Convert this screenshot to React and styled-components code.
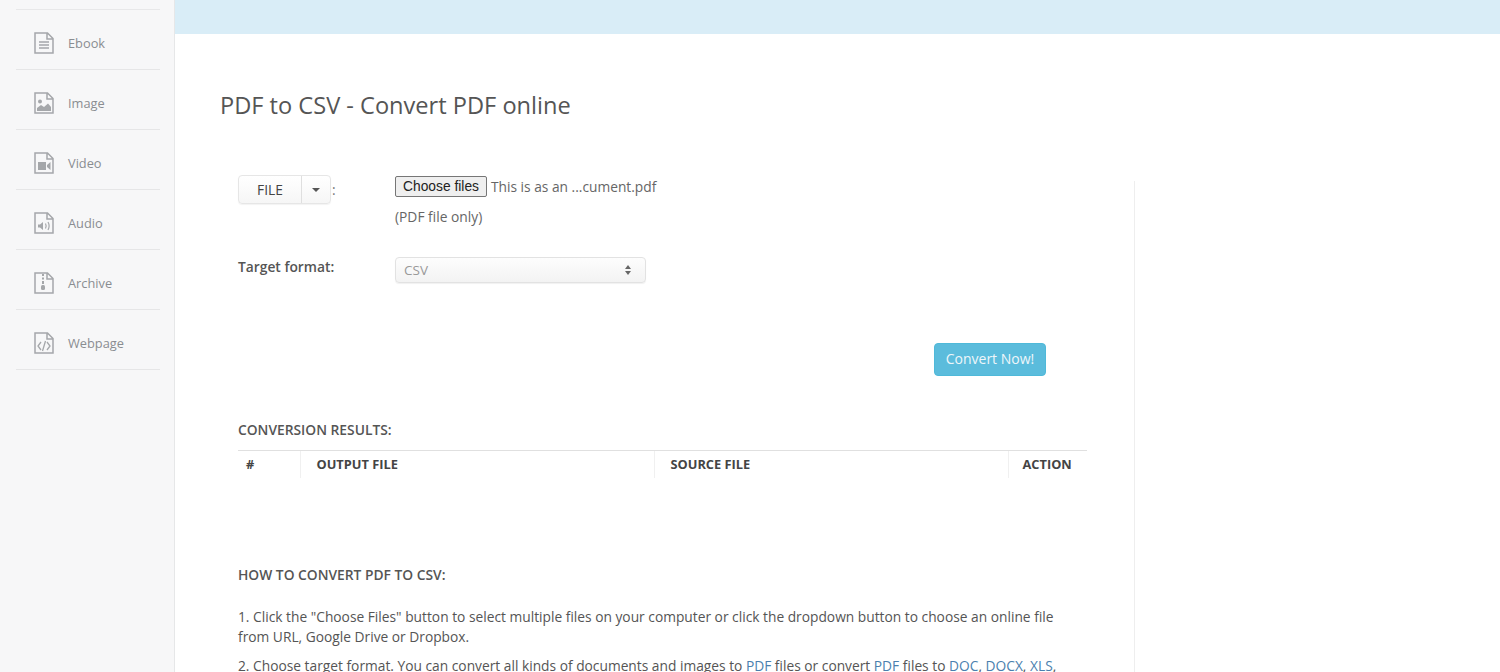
import styled, { createGlobalStyle } from 'styled-components';

const GlobalStyle = createGlobalStyle`
  html, body {
    margin: 0;
    padding: 0;
    height: 672px;
    overflow: hidden;
    background: #fff;
    font-family: 'Open Sans', 'Liberation Sans', sans-serif;
    color: #555;
  }
`;

const Page = styled.div`
  display: flex;
  height: 672px;
  overflow: hidden;
`;

const Sidebar = styled.aside`
  width: 174px;
  flex-shrink: 0;
  box-sizing: content-box;
  background: #f7f7f8;
  border-right: 1px solid #e6e7e8;
  padding-top: 9px;
`;

const NavList = styled.ul`
  list-style: none;
  margin: 0 14px 0 16px;
  padding: 0;
  border-top: 1px solid #e8e8e9;
`;

const NavItem = styled.li`
  display: flex;
  align-items: center;
  gap: 14px;
  box-sizing: border-box;
  height: 60px;
  padding: 6px 0 0 18px;
  border-bottom: 1px solid #e6e6e7;
  font-size: 12.8px;
  color: #8a8d91;
`;

const Main = styled.main`
  flex: 1;
  min-width: 0;
`;

const TopBar = styled.div`
  height: 34px;
  background: #d9edf7;
`;

const Content = styled.div`
  padding: 53px 0 0 45px;
`;

const Title = styled.h1`
  margin: 0;
  font-size: 23.6px;
  line-height: 36px;
  font-weight: 400;
  color: #555;
`;

const Panel = styled.div`
  width: 915px;
  height: 520px;
  margin-top: 58px;
  padding: 3px 0 0 18px;
  box-sizing: border-box;
  border-right: 1px solid #eeeeee;
`;

const FormRow = styled.div`
  display: grid;
  grid-template-columns: 157px 1fr;
  align-items: start;
`;

const SourceCell = styled.div`
  display: flex;
  align-items: center;
  margin-top: -9px;
  font-size: 13.8px;
  color: #777;
`;

const SplitGroup = styled.div`
  display: flex;
  height: 27px;
  margin-right: 1px;
  border: 1px solid #e6e6e6;
  border-radius: 4px;
  background: linear-gradient(#fff, #f6f6f6);
  box-shadow: 0 1px 1px rgba(0, 0, 0, 0.05);
`;

const SplitLabel = styled.span`
  width: 62px;
  display: flex;
  align-items: center;
  justify-content: center;
  border-right: 1px solid #dfdfdf;
  font-size: 13.8px;
  color: #444;
`;

const SplitCaret = styled.span`
  width: 28px;
  display: flex;
  align-items: center;
  justify-content: center;

  &::after {
    content: '';
    border-left: 4px solid transparent;
    border-right: 4px solid transparent;
    border-top: 4px solid #555;
  }
`;

const FileLine = styled.div`
  display: flex;
  align-items: center;
  gap: 4px;
  margin-top: -8px;
  font-size: 13.75px;
  line-height: 21px;
  color: #666;
`;

const ChooseButton = styled.button`
  box-sizing: border-box;
  width: 92px;
  height: 21px;
  padding: 0;
  background: #efefef;
  border: 1px solid #767676;
  border-radius: 2px;
  color: #222;
  font-family: 'Liberation Sans', Arial, sans-serif;
  font-size: 13.8px;
`;

const Hint = styled.p`
  margin: 10px 0 0;
  font-size: 13.8px;
  line-height: 20px;
  color: #666;
`;

const TargetRow = styled(FormRow)`
  margin-top: 30px;
`;

const FieldLabel = styled.label`
  font-size: 13.8px;
  line-height: 19px;
  font-weight: 600;
  color: #555;
`;

const FakeSelect = styled.div`
  box-sizing: border-box;
  width: 251px;
  height: 26px;
  display: flex;
  align-items: center;
  justify-content: space-between;
  padding: 0 14px 0 8px;
  border: 1px solid #e2e2e2;
  border-radius: 4px;
  background: linear-gradient(#fdfdfd, #f3f3f3);
  box-shadow: 0 1px 1px rgba(0, 0, 0, 0.06);
  font-size: 13.5px;
  color: #999;
`;

const Arrows = styled.span`
  display: flex;
  flex-direction: column;
  gap: 2px;

  &::before,
  &::after {
    content: '';
    border-left: 3px solid transparent;
    border-right: 3px solid transparent;
  }
  &::before {
    border-bottom: 4px solid #666;
  }
  &::after {
    border-top: 4px solid #666;
  }
`;

const ActionRow = styled.div`
  display: flex;
  justify-content: flex-end;
  width: 808px;
  margin-top: 60px;
`;

const ConvertButton = styled.button`
  width: 112px;
  height: 33px;
  padding: 0 0 2px;
  border: 1px solid #4fb9d9;
  border-radius: 4px;
  background: #5bbcdc;
  color: #eef6fa;
  font-family: inherit;
  font-size: 14px;
`;

const SectionHeading = styled.h2`
  margin: 0;
  font-size: 13.8px;
  line-height: 20px;
  font-weight: 600;
  color: #555;
`;

const ResultsHeading = styled(SectionHeading)`
  margin-top: 44px;
`;

const Table = styled.table`
  width: 849px;
  margin-top: 10px;
  border-collapse: collapse;
  table-layout: fixed;
`;

const HeadCell = styled.th`
  height: 27px;
  padding: 0 0 0 ${p => p.$pad}px;
  width: ${p => p.$w}px;
  box-sizing: border-box;
  border-top: 1px solid #e0e0e0;
  border-left: ${p => (p.$first ? 'none' : '1px solid #f0f0f0')};
  text-align: left;
  font-size: 12.8px;
  font-weight: 700;
  color: #444;
`;

const HowToHeading = styled(SectionHeading)`
  margin-top: 87px;
`;

const Step = styled.p`
  width: 840px;
  margin: 0;
  font-size: 13.78px;
  line-height: 20px;
  color: #555;
  white-space: nowrap;
`;

const FirstStep = styled(Step)`
  margin-top: 22px;
`;

const NextStep = styled(Step)`
  margin-top: 9px;
`;

const InlineLink = styled.a`
  color: #4a7fae;
  text-decoration: none;
`;

const FileIcon = ({ children }) => (
  <svg width="20" height="22" viewBox="0 0 20 22" fill="none" stroke="#a5a7aa" strokeWidth="1.5">
    <path d="M1 1h12.500L19 6.500V21H1z M13 1v6h6" />
    {children}
  </svg>
);

const icons = {
  Ebook: <path d="M5 10h10M5 13h10M5 16h10" />,
  Image: (
    <g fill="#a5a7aa" stroke="none">
      <circle cx="6" cy="9.500" r="2" />
      <path d="M3 19v-3l4-3 3 2 4-3.500 3 3.500v4z" />
    </g>
  ),
  Video: (
    <g fill="#a5a7aa" stroke="none">
      <rect x="4" y="10" width="8" height="8" />
      <path d="M13 13l3.500-3v8L13 15z" />
    </g>
  ),
  Audio: (
    <g>
      <path d="M4 12.500h2L9 10v8l-3-2.500H4z" fill="#a5a7aa" stroke="none" />
      <path d="M11.500 11.500c.8 1.500.8 3.500 0 5M14 10c1.400 2.500 1.400 5.500 0 8" strokeWidth="1.2" />
    </g>
  ),
  Archive: (
    <g fill="#a5a7aa" stroke="none">
      <rect x="8" y="2" width="2" height="2" />
      <rect x="8" y="5.500" width="2" height="2" />
      <rect x="8" y="9" width="2" height="3" />
      <rect x="7" y="13" width="4" height="5" rx="1.500" />
    </g>
  ),
  Webpage: <path d="M7 10l-3 4 3 4M13 10l3 4-3 4M11.500 9l-3 10" strokeWidth="1.3" />,
};

const navItems = ['Ebook', 'Image', 'Video', 'Audio', 'Archive', 'Webpage'];

export default function App() {
  return (
    <>
      <GlobalStyle />
      <Page>
        <Sidebar>
          <NavList>
            {navItems.map(name => (
              <NavItem key={name}>
                <FileIcon>{icons[name]}</FileIcon>
                {name}
              </NavItem>
            ))}
          </NavList>
        </Sidebar>
        <Main>
          <TopBar />
          <Content>
            <Title>PDF to CSV - Convert PDF online</Title>
            <Panel>
              <FormRow>
                <SourceCell>
                  <SplitGroup>
                    <SplitLabel>FILE</SplitLabel>
                    <SplitCaret />
                  </SplitGroup>
                  :
                </SourceCell>
                <div>
                  <FileLine>
                    <ChooseButton type="button">Choose files</ChooseButton>
                    This is as an ...cument.pdf
                  </FileLine>
                  <Hint>(PDF file only)</Hint>
                </div>
              </FormRow>
              <TargetRow>
                <FieldLabel>Target format:</FieldLabel>
                <FakeSelect>
                  CSV
                  <Arrows />
                </FakeSelect>
              </TargetRow>
              <ActionRow>
                <ConvertButton type="button">Convert Now!</ConvertButton>
              </ActionRow>
              <ResultsHeading>CONVERSION RESULTS:</ResultsHeading>
              <Table>
                <thead>
                  <tr>
                    <HeadCell $w={62} $pad={8} $first>#</HeadCell>
                    <HeadCell $w={354} $pad={16}>OUTPUT FILE</HeadCell>
                    <HeadCell $w={354} $pad={16}>SOURCE FILE</HeadCell>
                    <HeadCell $w={79} $pad={14}>ACTION</HeadCell>
                  </tr>
                </thead>
              </Table>
              <HowToHeading>HOW TO CONVERT PDF TO CSV:</HowToHeading>
              <FirstStep>
                1. Click the "Choose Files" button to select multiple files on your computer or click the dropdown button to choose an online file
                <br />
                from URL, Google Drive or Dropbox.
              </FirstStep>
              <NextStep>
                2. Choose target format. You can convert all kinds of documents and images to <InlineLink href="#">PDF</InlineLink> files or convert <InlineLink href="#">PDF</InlineLink> files to <InlineLink href="#">DOC</InlineLink>, <InlineLink href="#">DOCX</InlineLink>, <InlineLink href="#">XLS</InlineLink>,
              </NextStep>
            </Panel>
          </Content>
        </Main>
      </Page>
    </>
  );
}
